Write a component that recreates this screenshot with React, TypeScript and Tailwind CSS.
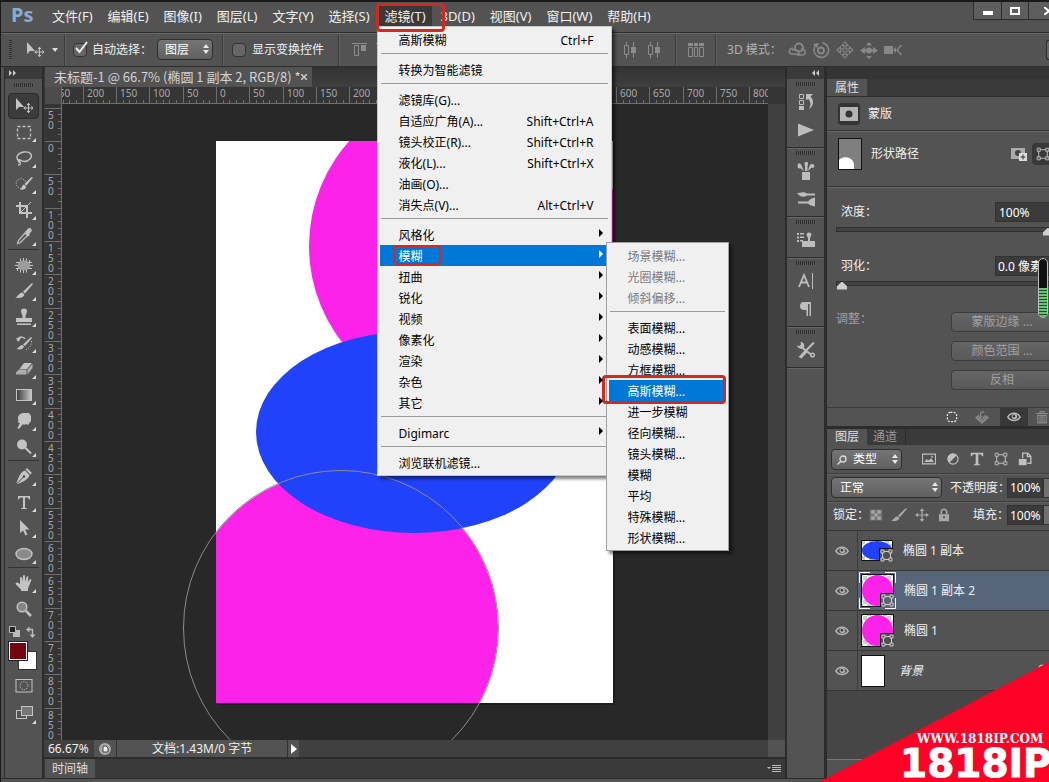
import React from 'react';

type Icon = React.FC;

const Svg: React.FC<{ children: React.ReactNode; size?: string }> = ({ children, size = 'w-[18px] h-[18px]' }) => (
  <svg viewBox="0 0 18 18" className={`${size} shrink-0`} fill="currentColor" stroke="none" aria-hidden="true">
    {children}
  </svg>
);

const MoveIcon: Icon = () => (
  <Svg>
    <path d="M1 1v12l3-3 5 0z" />
    <path d="M13.500 6.500v9M9 11h9M12 8.200l1.500-2 1.500 2M12 13.800l1.500 2 1.500-2M10.700 9.500l-2 1.500 2 1.500M16.300 9.500l2 1.500-2 1.500" fill="none" stroke="currentColor" />
  </Svg>
);
const MarqueeIcon: Icon = () => (
  <Svg><rect x="2.500" y="3.500" width="13" height="12" fill="none" stroke="currentColor" strokeWidth="1.300" strokeDasharray="3 2" /></Svg>
);
const LassoIcon: Icon = () => (
  <Svg>
    <path d="M4 12C0 9 2 4 9 3c7-1 9 4 6 7-3 3-7 3-10 1-2-1-2 1-1 2 2 1 2 3-1 3" fill="none" stroke="currentColor" strokeWidth="1.400" />
    <circle cx="4.500" cy="11.800" r="1.400" />
  </Svg>
);
const QuickSelectIcon: Icon = () => (
  <Svg>
    <circle cx="6" cy="8.500" r="4.800" fill="none" stroke="currentColor" strokeDasharray="1.200 1.200" />
    <path d="M18 2.500l-6.500 8-2-1.500 7-7zM9 9.500l2 2c0 3-3 3.500-6 3 2-1 1.500-4 4-5z" />
  </Svg>
);
const CropIcon: Icon = () => (
  <Svg>
    <path d="M5 1v11h12M1 5h11v12" fill="none" stroke="currentColor" strokeWidth="2" />
    <path d="M5.500 11.500L16 1" stroke="currentColor" />
  </Svg>
);
const EyedropperIcon: Icon = () => (
  <Svg>
    <path d="M10 4.500l1.500-1 1.500-2c2-1.500 4.500.5 3.500 3l-2 2 0 2-1.500 1z" />
    <path d="M10 6l2.500 2.500-7 7-3 1 1-3z" fill="none" stroke="currentColor" strokeWidth="1.200" />
  </Svg>
);
const PatchIcon: Icon = () => (
  <Svg>
    <ellipse cx="9" cy="9.500" rx="6.500" ry="5" fill="#9c9c9c" />
    <path d="M5.500 2.500v3M8.500 2v3M11.500 2.500v3M5.500 13.500v3M8.500 14v3M11.500 13.500v3M14.500 4v3M2.500 12v3M1 6.500h4M0 9.500h3M1 12.500h4M13 6.500h4M15 9.500h3M13 12.500h4" stroke="currentColor" />
  </Svg>
);
const BrushIcon: Icon = () => (
  <Svg>
    <path d="M17 1l1 1-8 9.500-2-1.800zM7.500 10.500l2 2C8.500 16 4 16.500 0 15.500c3-.5 4-5 7.500-5z" />
  </Svg>
);
const StampIcon: Icon = () => (
  <Svg>
    <path d="M6 3.500a3 3 0 0 1 6 0c0 2-1.500 2.500-1.500 4.500v2H17v4H1v-4h6.500V8C7.500 6 6 5.500 6 3.500zM2 15.500h14V17H2z" />
  </Svg>
);
const HistoryBrushIcon: Icon = () => (
  <Svg>
    <path d="M16 3l1 1-7 8-2-1.600zM7.500 11l1.500 1.500C8 15.500 5 16 1 15c3-.5 3.500-4 6.500-4z" />
    <path d="M3 5c2-3 6-2 7 0" fill="none" stroke="currentColor" strokeWidth="1.500" />
    <path d="M1 4l5 .5L3 8z" />
    <path d="M16.500 7c0 4-1 7-6 9" fill="none" stroke="currentColor" strokeDasharray="1 1.500" />
  </Svg>
);
const EraserIcon: Icon = () => (
  <Svg>
    <path d="M9 3h8l-5 6H4.500z" />
    <path d="M12.500 9.500L17.500 4v4l-5 6.500zM1 14.500v-2l3-3h7.500v5z" opacity=".8" />
  </Svg>
);
const GradientIcon: Icon = () => (
  <Svg>
    <defs>
      <linearGradient id="grad"><stop stopColor="#3a3a3a" /><stop offset="1" stopColor="#c8c8c8" /></linearGradient>
    </defs>
    <rect x="1.500" y="3.500" width="15" height="11" fill="url(#grad)" stroke="currentColor" />
  </Svg>
);
const SmudgeIcon: Icon = () => (
  <Svg>
    <path d="M3 6c0-3 3-5 6-5h5l2 3v5l-3 4-2-1-2 1-1-1-4 5-1.500-1L5 11H3.500z" />
  </Svg>
);
const DodgeIcon: Icon = () => (
  <Svg>
    <circle cx="7" cy="6.500" r="5" />
    <path d="M10 9.500l6 6" stroke="currentColor" strokeWidth="2" />
  </Svg>
);
const PenIcon: Icon = () => (
  <Svg>
    <path d="M12 1l5 5-1.500 1.500-5-5zM10 3.500l4.500 4.500c-1 4-5 6-12 9L1.500 16C4 9 6 4.500 10 3.500z" />
    <path d="M2 16.500L8.500 10" stroke="#484848" />
    <circle cx="9" cy="9.500" r="1.200" fill="#484848" />
  </Svg>
);
const TypeIcon: Icon = () => (
  <Svg><path d="M3 3h12v3.500h-1C13.700 5 13 4.500 10 4.500V14c0 1 .5 1.200 2 1.200V16H6v-.8c1.500 0 2-.2 2-1.200V4.500C5 4.500 4.300 5 4 6.500H3z" /></Svg>
);
const PathSelectIcon: Icon = () => (
  <Svg><path d="M5 1v13l3-2.500 2.500 5 2-1-2.500-5h4.500z" /></Svg>
);
const EllipseIcon: Icon = () => (
  <Svg><ellipse cx="9" cy="9" rx="8" ry="5.500" fill="#8a8a8a" stroke="currentColor" strokeWidth="1.300" /></Svg>
);
const HandIcon: Icon = () => (
  <Svg>
    <path d="M5 10V4c0-1.500 1.700-1.500 2 0l.5 3.500L8 2c.2-1.500 1.800-1.500 2 0v5.500L11.500 3c.5-1.300 2-1 1.800.5L12.800 8l1.700-2.500c1-1.300 2.300-.3 1.700 1L13 14.500V17H6v-1.500L1 10.500C0 9 1.500 8 2.800 8.800z" />
  </Svg>
);
const ZoomIcon: Icon = () => (
  <Svg>
    <circle cx="7" cy="7" r="4.800" fill="#858585" stroke="currentColor" strokeWidth="1.500" />
    <path d="M11 11l5 5" stroke="currentColor" strokeWidth="2.500" />
  </Svg>
);
const QuickMaskIcon: Icon = () => (
  <Svg>
    <rect x="1" y="2.500" width="16" height="12.500" fill="none" stroke="currentColor" />
    <circle cx="9" cy="8.700" r="4" fill="none" stroke="currentColor" strokeDasharray="1.300 1.200" />
  </Svg>
);
const ScreenIcon: Icon = () => (
  <Svg>
    <rect x="1.500" y="6.500" width="10" height="8" fill="none" stroke="currentColor" />
    <rect x="6.500" y="2.500" width="11" height="9" fill="#777" stroke="currentColor" />
  </Svg>
);
const HistoryIcon: Icon = () => (
  <Svg>
    <path d="M2.500 1.500h4v4h-4zM2.500 7.500h4v4h-4z" fill="none" stroke="currentColor" />
    <path d="M2 13h5v4H2zM9 7V1h7l-2.500 2.500C18 8 16 14 12 16c2-4 2-7-.5-10z" />
  </Svg>
);
const PlayIcon: Icon = () => <Svg><path d="M1 2.500l16 6.500-16 6.500z" /></Svg>;
const BrushPresetIcon: Icon = () => (
  <Svg>
    <path d="M5 10h8v8H5zM8 0h2.500v9H8zM1 1l3 1.500L7 9 3 6zM16 3l-2 3-3 3 1-4z" />
    <ellipse cx="2.500" cy="4" rx="2" ry="2.500" /><ellipse cx="15" cy="4" rx="2.500" ry="2" /><ellipse cx="9.200" cy="2" rx="1.800" ry="2" />
  </Svg>
);
const BrushPanelIcon: Icon = () => (
  <Svg>
    <path d="M0 3c3 0 5-1.500 8-.5L10 3.500h8v2h-8C7 8 3 7 0 3zM1 11.500h10c2-2.500 4-3.500 7-4v9c-3-.5-5-1-7-3H1z" />
  </Svg>
);
const CloneSourceIcon: Icon = () => (
  <Svg>
    <path d="M0 2h2v2H0zM3 2h4v1.500H3zM0 5.500h2v2H0zM3 5.500h4V7H3zM0 9h2v2H0zM3 9h3v1.500H3zM9.500 4a2.500 2.500 0 0 1 5 0L13 7v3h5v6H5v-6h6V7z" />
  </Svg>
);
const CharacterIcon: Icon = () => (
  <Svg>
    <path d="M2 15L7 3l5 12M4 10.500h6" fill="none" stroke="currentColor" strokeWidth="1.800" />
    <path d="M15.500 1v16" stroke="currentColor" />
  </Svg>
);
const ParagraphIcon: Icon = () => (
  <Svg>
    <path d="M14 2H7a4 4 0 0 0 0 8h2.500v6H11V4h1.500v12H14z" />
  </Svg>
);
const ToolsIcon: Icon = () => (
  <Svg>
    <path d="M17 1.500L9 9.500M3 5l11 8.500" stroke="currentColor" strokeWidth="2" />
    <path d="M8.500 8.500l2.500 2-6.500 7-3-1.500z" />
    <path d="M0 4.500l2.500.5L4 3.500 3.500 1c3 0 4.500 2.500 3.500 5.500-2 2.500-6.500 1-7-2z" />
    <circle cx="15.500" cy="14" r="1.800" fill="none" stroke="currentColor" strokeWidth="1.500" />
  </Svg>
);
const EyeIcon: Icon = () => (
  <Svg size="w-[14px] h-[14px]">
    <path d="M1 9c4-6.500 12-6.500 16 0-4 6-12 6-16 0z" fill="none" stroke="currentColor" strokeWidth="1.800" />
    <circle cx="9.500" cy="8.500" r="3.500" />
    <circle cx="9" cy="8" r="1.600" fill="#333" />
  </Svg>
);
const FrameIcon: Icon = () => (
  <Svg size="w-[14px] h-[14px]">
    <path d="M3.500 3.500h11v11h-11z" fill="none" stroke="currentColor" strokeWidth="1.300" />
    <path d="M1.500 1.500h4v4h-4zM12.500 1.500h4v4h-4zM1.500 12.500h4v4h-4zM12.500 12.500h4v4h-4z" fill="#555" stroke="currentColor" strokeWidth="1.200" />
  </Svg>
);
const PixelIcon: Icon = () => (
  <Svg size="w-[14px] h-[14px]">
    <path d="M.7 2.700h16.600v12.600H.7z" fill="none" stroke="currentColor" strokeWidth="1.400" />
    <path d="M3 13l3-4 2 2 4-3 3 5z" /><circle cx="13" cy="6" r="1.200" />
  </Svg>
);
const AdjustIcon: Icon = () => (
  <Svg size="w-[14px] h-[14px]">
    <circle cx="9" cy="9" r="6.500" fill="none" stroke="currentColor" strokeWidth="1.500" />
    <path d="M4.500 13.500a6.400 6.400 0 1 1 9-9z" />
  </Svg>
);
const SmallTypeIcon: Icon = () => (
  <Svg size="w-[14px] h-[14px]"><path d="M1 1h16v4.500h-1.500C15 3.500 14 3 10.700 3v11.500c0 1.200.8 1.500 2.300 1.500v1H5v-1c1.500 0 2.300-.3 2.300-1.500V3C4 3 3 3.500 2.500 5.500H1z" /></Svg>
);
const SmartIcon: Icon = () => (
  <Svg size="w-[14px] h-[14px]">
    <path d="M6 8V1.500h6.500l4 4v9H12M12 2v4h4" fill="none" stroke="currentColor" strokeWidth="1.700" />
    <path d="M1 9h10v8H1z" />
  </Svg>
);
const CheckerIcon: Icon = () => (
  <Svg size="w-[14px] h-[14px]">
    <path d="M1 2h16v14H1z" opacity=".45" />
    <path d="M3 3h4v4H3zM11 3h4v4h-4zM7 7h4v4H7zM3 11h4v4H3zM11 11h4v4h-4z" />
  </Svg>
);
const SmallBrushIcon: Icon = () => (
  <Svg size="w-[16px] h-[16px]">
    <path d="M17 1l1 1-8 9.500-2-1.800zM7.500 10.500l2 2C8.500 16 4 16.500 0 15.500c3-.5 4-5 7.500-5z" />
  </Svg>
);
const CrossArrowsIcon: Icon = () => (
  <Svg size="w-[14px] h-[14px]">
    <path d="M9 2v14M2 9h14" stroke="currentColor" strokeWidth="1.600" />
    <path d="M9 0l3 4H6zM9 18l3-4H6zM0 9l4-3v6zM18 9l-4-3v6z" />
  </Svg>
);
const LockIcon: Icon = () => (
  <Svg size="w-[14px] h-[14px]">
    <path d="M5.500 8V5a3.500 3.500 0 0 1 7 0v3" fill="none" stroke="currentColor" strokeWidth="2" />
    <path d="M2.500 8h13v9h-13z" /><circle cx="9" cy="12" r="1.300" fill="#444" />
  </Svg>
);
const SelectionIcon: Icon = () => (
  <Svg size="w-[14px] h-[14px]">
    <rect x="3" y="3" width="12" height="12" rx="4" fill="none" stroke="#eee" strokeWidth="1.600" strokeDasharray="2.400 1.800" />
  </Svg>
);
const ApplyIcon: Icon = () => (
  <Svg size="w-[16px] h-[16px]">
    <path d="M1 9.500L6 6v3H4.500L9 14l4.500-5H12V6l5 3.500L9 17z" />
    <path d="M7.500 10V5c0-2 3-2.500 4-1M9 12.500L5.500 9h7z" fill="none" stroke="currentColor" strokeWidth="1.400" />
  </Svg>
);
const TrashIcon: Icon = () => (
  <Svg size="w-[14px] h-[14px]">
    <path d="M1.500 4.500h15M6.500 4V2h5v2M3.500 7h11v9.500h-11zM6.500 7v9M9 7v9M11.500 7v9" fill="none" stroke="currentColor" strokeWidth="1.500" />
  </Svg>
);
const AlignIcon: Icon = () => (
  <Svg>
    <path d="M1 2.500h15M3.500 4.500h4v10h-4z" fill="none" stroke="currentColor" />
    <path d="M10 4h5v6h-5z" />
  </Svg>
);
const DistributeIcon: Icon = () => (
  <Svg>
    <path d="M3.500 1v3M3.500 14v3M1.500 4.500h4v9h-4zM10.500 1v16" fill="none" stroke="currentColor" />
    <path d="M8 6h5v6H8z" />
  </Svg>
);
const AutoAlignIcon: Icon = () => (
  <Svg>
    <path d="M1.500 6.500h4v9h-4zM7.500 6.500h3v9h-3zM12.500 6.500h4v9h-4z" fill="none" stroke="currentColor" />
    <path d="M1 2h5v3H1zM7 2h4v3H7zM12 2h5v3h-5z" />
  </Svg>
);
const OrbitIcon: Icon = () => (
  <Svg>
    <circle cx="11" cy="6.500" r="4" fill="none" stroke="currentColor" strokeWidth="1.800" />
    <path d="M5 7c-5 1-5 6 0 6 4 1 5 0 7-1M13 8c5 0 6 6 1 6H9M4 9c3-1 5 0 7 2" fill="none" stroke="currentColor" strokeWidth="1.600" />
  </Svg>
);
const RollIcon: Icon = () => (
  <Svg>
    <circle cx="9" cy="9.500" r="3" fill="none" stroke="currentColor" strokeWidth="1.800" />
    <path d="M4 4a7.300 7.300 0 1 0 6-2.200" fill="none" stroke="currentColor" strokeWidth="1.600" />
    <path d="M1 3l6-1-2 5z" />
  </Svg>
);
const PanIcon: Icon = () => (
  <Svg>
    <path d="M9 1l3 3.500h-2V8h3.500V6L17 9l-3.500 3v-2H10v3.500h2L9 17l-3-3.500h2V10H4.500v2L1 9l3.500-3v2H8V4.500H6z" fill="none" stroke="currentColor" strokeWidth="1.100" />
  </Svg>
);
const SlideIcon: Icon = () => (
  <Svg>
    <circle cx="9" cy="9.500" r="3" />
    <path d="M9 1l3 3.500H6zM9 18l3-3H6zM0 9.500L5 6v7zM18 9.500L13 6v7z" />
    <path d="M2 9.500h14" stroke="currentColor" strokeWidth="2" />
  </Svg>
);
const CameraIcon: Icon = () => (
  <Svg>
    <path d="M0 5h9v8H0zM9 9l3-3v6z" /><path d="M17.500 4L13 9l4.500 5" fill="none" stroke="currentColor" strokeWidth="1.500" />
  </Svg>
);

const menus = ['文件(F)', '编辑(E)', '图像(I)', '图层(L)', '文字(Y)', '选择(S)', '滤镜(T)', '3D(D)', '视图(V)', '窗口(W)', '帮助(H)'];

interface MenuEntry {
  label?: string;
  keys?: string;
  sub?: boolean;
  disabled?: boolean;
}

const filterMenu: MenuEntry[] = [
  { label: '高斯模糊', keys: 'Ctrl+F' },
  {},
  { label: '转换为智能滤镜' },
  {},
  { label: '滤镜库(G)...' },
  { label: '自适应广角(A)...', keys: 'Shift+Ctrl+A' },
  { label: '镜头校正(R)...', keys: 'Shift+Ctrl+R' },
  { label: '液化(L)...', keys: 'Shift+Ctrl+X' },
  { label: '油画(O)...' },
  { label: '消失点(V)...', keys: 'Alt+Ctrl+V' },
  {},
  { label: '风格化', sub: true },
  { label: '模糊', sub: true },
  { label: '扭曲', sub: true },
  { label: '锐化', sub: true },
  { label: '视频', sub: true },
  { label: '像素化', sub: true },
  { label: '渲染', sub: true },
  { label: '杂色', sub: true },
  { label: '其它', sub: true },
  {},
  { label: 'Digimarc', sub: true },
  {},
  { label: '浏览联机滤镜...' },
];

const blurMenu: MenuEntry[] = [
  { label: '场景模糊...', disabled: true },
  { label: '光圈模糊...', disabled: true },
  { label: '倾斜偏移...', disabled: true },
  {},
  { label: '表面模糊...' },
  { label: '动感模糊...' },
  { label: '方框模糊...' },
  { label: '高斯模糊...' },
  { label: '进一步模糊' },
  { label: '径向模糊...' },
  { label: '镜头模糊...' },
  { label: '模糊' },
  { label: '平均' },
  { label: '特殊模糊...' },
  { label: '形状模糊...' },
];

const Separator = () => (
  <li className="h-[9px] px-px pt-[3px]">
    <div className="h-px bg-[#9a9a9a]" />
  </li>
);

const BlurMenu = () => (
  <ul className="absolute left-[226px] -top-[3px] w-[123px] border border-[#a0a0a0] bg-[#f0f0f0] px-[2px] py-[2px] text-black shadow-[3px_3px_3px_rgba(0,0,0,0.5)]">
    {blurMenu.map((item, i) => {
      if (!item.label) return <Separator key={i} />;
      const active = item.label === '高斯模糊...';
      return (
        <li key={i} className={`relative h-[21px] ${active ? 'bg-[#0078d7] text-white' : ''}`}>
          <button disabled={item.disabled} className="h-full w-full pl-[19px] pt-[3px] text-left disabled:text-[#7a7a7a]">{item.label}</button>
          {active && <div className="absolute -left-[7px] -top-[5px] h-[29px] w-[124px] rounded border-[3px] border-[#d5281e]" />}
        </li>
      );
    })}
  </ul>
);

const FilterMenu = () => (
  <ul className="absolute -left-[2px] top-5 w-[235px] border border-[#c8c8c8] bg-[#f0f0f0] px-[2px] py-[2px] text-xs text-black shadow-[3px_3px_3px_rgba(0,0,0,0.5)]">
    {filterMenu.map((item, i) => {
      if (!item.label) return <Separator key={i} />;
      const active = item.label === '模糊';
      return (
        <li key={i} className={`relative h-[21px] ${active ? 'bg-[#0078d7]' : ''}`}>
          <button className={`flex h-full w-full items-center justify-between pl-[19px] pt-[3px] ${item.sub ? 'pr-[6px]' : 'pr-[15px]'} ${active ? 'text-white' : ''}`}>
            <span>{item.label}</span>
            {item.keys && <span>{item.keys}</span>}
            {item.sub && <svg viewBox="0 0 4 8" className="mb-[5px] h-2 w-1" fill="currentColor"><path d="M0 0l4 4-4 4z" /></svg>}
          </button>
          {active && <div className="absolute left-[13px] top-0 h-5 w-12 rounded border-2 border-[#d5281e]" />}
          {active && <BlurMenu />}
        </li>
      );
    })}
  </ul>
);

const MenuBar = () => (
  <header className="relative z-20 flex h-8 shrink-0 items-center border-t-2 border-[#1a1a1a] bg-[#535353] pb-0.5 pl-[10px] text-[13px]">
    <span className="w-[35px] pb-0.5 text-[20px] font-bold leading-6 text-[#84aed6]">Ps</span>
    <nav className="flex gap-[3px]">
      {menus.map(m => (
        <div key={m} className="relative">
          <button className={`h-[21px] whitespace-nowrap px-1.5 leading-5 ${m === '滤镜(T)' ? 'bg-[#3a3838]' : ''}`}>{m}</button>
          {m === '滤镜(T)' && (
            <>
              <FilterMenu />
              <div className="absolute -left-[3px] -top-[3px] z-10 h-[29px] w-[69px] rounded border-[3px] border-[#d5281e]" />
            </>
          )}
        </div>
      ))}
    </nav>
    <div className="ml-auto flex w-[76px] shrink-0 self-start overflow-hidden border-b border-l border-[#2c2c2c]">
      <button aria-label="最小化" className="flex h-[17px] w-7 shrink-0 items-center justify-center border-r border-[#2c2c2c] bg-[#5e5e5e]">
        <span className="mt-1 h-1 w-[10px] bg-white" />
      </button>
      <button aria-label="最大化" className="flex h-[17px] w-[27px] shrink-0 items-center justify-center border-r border-[#2c2c2c] bg-[#5e5e5e]">
        <span className="h-2 w-[10px] border-2 border-white" />
      </button>
      <button aria-label="关闭" className="flex h-[17px] w-10 shrink-0 items-center justify-center bg-[#5e5e5e]">
        <svg viewBox="0 0 10 8" className="h-2 w-[10px]" stroke="#fff" strokeWidth="2"><path d="M0 0l10 8M10 0L0 8" /></svg>
      </button>
    </div>
  </header>
);

const Divider = ({ className }: { className: string }) => (
  <span className={`h-8 w-[2px] shrink-0 border-l border-r border-l-[#3c3c3c] border-r-[#626262] ${className}`} />
);

const Spinner = () => (
  <svg viewBox="0 0 6 10" className="pointer-events-none absolute right-1 top-[5px] h-[10px] w-[6px]" fill="#e8e8e8">
    <path d="M0 4l3-4 3 4zM0 6l3 4 3-4z" />
  </svg>
);

const selectStyle = 'h-[21px] w-full appearance-none rounded-sm border border-[#2e2e2e] bg-linear-to-b from-[#757575] to-[#606060] text-xs leading-none text-white';

const Check = ({ checked }: { checked?: boolean }) => (
  <span className="relative h-[14px] w-[14px] shrink-0">
    <input type="checkbox" defaultChecked={checked} className="peer block h-[14px] w-[14px] appearance-none rounded-sm border border-[#333] bg-[#666]" />
    <svg viewBox="0 0 14 14" className="pointer-events-none absolute left-0.5 -top-0.5 hidden h-[14px] w-[14px] peer-checked:block" fill="none" stroke="#eee" strokeWidth="2">
      <path d="M1 7l3.500 4L12 1" />
    </svg>
  </span>
);

const OptionsBar = () => (
  <div className="flex h-[35px] shrink-0 items-center overflow-hidden whitespace-nowrap border-b border-t border-b-[#2e2e2e] border-t-[#2f2f2f] bg-[#535353] pl-2 text-xs shadow-[inset_0_1px_0_#6a6a6a]">
    <span className="h-5 w-[3px] shrink-0 bg-[repeating-linear-gradient(180deg,#2e2e2e_0_1px,#5a5a5a_1px_2px)]" />
    <span className="ml-[14px] flex shrink-0 text-[#c4c4c4]"><MoveIcon /></span>
    <svg viewBox="0 0 6 4" className="ml-2 h-1 w-[6px] shrink-0" fill="#ddd"><path d="M0 0h6L3 4z" /></svg>
    <Divider className="ml-[6px]" />
    <label className="ml-[7px] flex items-center gap-[5px]"><Check checked />自动选择：</label>
    <span className="relative ml-[5px] w-14 shrink-0">
      <select aria-label="自动选择" className={`${selectStyle} pl-[7px]`}><option>图层</option></select>
      <Spinner />
    </span>
    <Divider className="ml-[9px]" />
    <label className="ml-2 flex items-center gap-[6px]"><Check />显示变换控件</label>
    <Divider className="ml-[14px]" />
    <div className="ml-[11px] flex shrink-0 gap-[6px] text-[#8c8c8c]">
      {[...Array(7)].map((_, i) => <AlignIcon key={i} />)}
    </div>
    <div className="ml-[14px] flex shrink-0 gap-[6px] text-[#8c8c8c]">
      {[...Array(6)].map((_, i) => <DistributeIcon key={i} />)}
    </div>
    <Divider className="ml-[10px]" />
    <span className="ml-[10px] flex shrink-0 text-[#8c8c8c]"><AutoAlignIcon /></span>
    <Divider className="ml-[10px]" />
    <span className="ml-[10px] w-[61px] shrink-0 text-[#b0b0b0]">3D 模式：</span>
    <div className="flex shrink-0 gap-[6px] text-[#888]">
      <OrbitIcon /><RollIcon /><PanIcon /><SlideIcon /><CameraIcon />
    </div>
    <span className="ml-auto h-5 w-[3px] shrink-0 rounded-l-sm border border-r-0 border-[#2e2e2e] bg-[#666]" />
  </div>
);

const toolGroups: [string, Icon][][] = [
  [['移动', MoveIcon], ['矩形选框', MarqueeIcon], ['套索', LassoIcon], ['快速选择', QuickSelectIcon], ['裁剪', CropIcon], ['吸管', EyedropperIcon]],
  [['修补', PatchIcon], ['画笔', BrushIcon], ['仿制图章', StampIcon], ['历史记录画笔', HistoryBrushIcon], ['橡皮擦', EraserIcon], ['渐变', GradientIcon], ['涂抹', SmudgeIcon], ['减淡', DodgeIcon]],
  [['钢笔', PenIcon], ['文字', TypeIcon], ['路径选择', PathSelectIcon], ['椭圆', EllipseIcon]],
  [['抓手', HandIcon], ['缩放', ZoomIcon]],
];

const Corner = () => (
  <svg viewBox="0 0 4 4" className="absolute bottom-[3px] right-[3px] h-1 w-1" fill="#ddd"><path d="M4 0v4H0z" /></svg>
);

const Grip = () => (
  <span className="h-1 w-5 bg-[repeating-linear-gradient(90deg,#2c2c2c_0_1px,#5a5a5a_1px_2px)]" />
);

const Toolbar = () => (
  <aside className="flex w-[39px] shrink-0 flex-col border-r-2 border-[#2c2c2c] text-[#c4c4c4]">
    <div className="flex h-3 shrink-0 items-center bg-[#3a3a3a] pl-1">
      <svg viewBox="0 0 8 6" className="h-[6px] w-2" fill="#ccc"><path d="M0 0l3 3-3 3zM4 0l3 3-3 3z" /></svg>
    </div>
    <div className="flex h-[14px] shrink-0 justify-center pt-1"><Grip /></div>
    {toolGroups.map((group, g) => (
      <div key={g} className={`mx-[3px] flex flex-col ${g > 0 ? 'border-t border-[#333] pt-[2px]' : ''}`}>
        {group.map(([label, ToolIcon]) => (
          <button
            key={label}
            aria-label={label}
            className={`relative flex h-[26px] items-center justify-center ${label === '移动' ? 'rounded-sm border border-[#2b2b2b] bg-[#3c3c3c]' : ''}`}
          >
            <ToolIcon />
            {label !== '移动' && label !== '缩放' && <Corner />}
          </button>
        ))}
      </div>
    ))}
    <div className="mt-1 flex h-3 shrink-0 justify-between px-1">
      <svg viewBox="0 0 12 12" className="h-3 w-3" fill="#bbb"><path d="M4 4h7v7H4z" /><path d="M.5.5h6v6h-6z" fill="#222" stroke="#bbb" /></svg>
      <svg viewBox="0 0 12 12" className="h-3 w-3" fill="#bbb"><path d="M2 3.500h4.500V9" fill="none" stroke="#bbb" strokeWidth="1.400" /><path d="M0 3.500L3.500.5v6zM6.500 12l-3-3.500h6z" /></svg>
    </div>
    <div className="relative ml-1 mt-1 h-7 w-7 shrink-0">
      <button aria-label="背景色" className="absolute bottom-0 right-0 h-[19px] w-[19px] border border-[#333] bg-white" />
      <button aria-label="前景色" className="absolute left-0 top-0 h-[18px] w-[18px] border border-white bg-[#720510] outline outline-[#222]" />
    </div>
    <button aria-label="快速蒙版" className="mt-[3px] flex h-[26px] shrink-0 items-center justify-center"><QuickMaskIcon /></button>
    <button aria-label="屏幕模式" className="relative mx-[3px] flex h-[28px] shrink-0 items-center justify-center"><ScreenIcon /><Corner /></button>
  </aside>
);

// 50 units of the ruler are 100/3 px at 66.67% zoom
const STEP = 100 / 3;
const range = (from: number, to: number) => [...Array(to - from + 1)].map((_, i) => from + i);

const HorizontalRuler = () => (
  <svg className="h-[17px] w-full" fontSize="10" fill="#a8a8a8">
    <path d="M0 16.500h706" stroke="#6e6e6e" />
    {range(-25, 88).map(i => (
      <path key={i} d={`M${Math.round(154 + (i * STEP) / 5) + 0.5} ${i % 5 === 0 ? 0 : 13}V17`} stroke="#6e6e6e" />
    ))}
    {range(-5, 16).map(i => (
      <text key={i} x={Math.round(158 + i * STEP)} y="10">{Math.abs(i * 50)}</text>
    ))}
  </svg>
);

const VerticalRuler = () => (
  <svg className="h-full w-[17px] shrink-0 bg-[#353535]" fontSize="10" fill="#a8a8a8">
    <path d="M16.500 0v640" stroke="#6e6e6e" />
    {range(-5, 90).map(i => (
      <path key={i} d={`M${i % 5 === 0 ? 0 : 13} ${Math.round(37 + (i * STEP) / 5) + 0.5}H17`} stroke="#6e6e6e" />
    ))}
    {range(-1, 17).map(i =>
      String(Math.abs(i * 50)).split('').map((digit, d) => (
        <text key={`${i}-${d}`} x="3" y={Math.round(48 + i * STEP) + d * 10}>{digit}</text>
      ))
    )}
  </svg>
);

const Artwork = () => (
  <svg className="h-full w-full">
    <defs>
      <clipPath id="page"><rect x="154" y="37" width="397" height="562" /></clipPath>
    </defs>
    <rect x="156" y="39" width="397" height="562" fill="#1e1e1e" />
    <rect x="154" y="37" width="397" height="562" fill="#fff" />
    <g clipPath="url(#page)">
      <circle cx="404" cy="142" r="157" fill="#fd22ea" />
      <circle cx="279" cy="524" r="157" fill="#fd22ea" />
      <ellipse cx="352" cy="328" rx="158" ry="101" fill="#2142fb" />
    </g>
    <circle cx="279" cy="524" r="157.500" fill="none" stroke="#8c8c8c" />
  </svg>
);

const Document = () => (
  <main className="flex min-w-0 flex-1 flex-col bg-[#3a3a3a]">
    <div className="flex h-5 shrink-0 items-stretch bg-linear-to-b from-[#333] to-[#3f3f3f] pl-px">
      <div className="flex w-[267px] items-center justify-between whitespace-nowrap bg-[#535353] pl-[9px] pr-[7px] font-['Noto_Sans_CJK_SC',sans-serif] text-[13px] text-[#d4d4d4]">
        未标题-1 @ 66.7% (椭圆 1 副本 2, RGB/8) *
        <button aria-label="关闭文档" className="text-[#ccc]">
          <svg viewBox="0 0 6 6" className="h-[6px] w-[6px]" stroke="currentColor" strokeWidth="1.500"><path d="M0 0l6 6M6 0L0 6" /></svg>
        </button>
      </div>
    </div>
    <div className="flex h-[17px] shrink-0 bg-[#353535] pl-px pr-[17px]">
      <span className="w-[17px] shrink-0 border-r border-[#6e6e6e] bg-[#4c4c4c]" />
      <HorizontalRuler />
    </div>
    <div className="flex min-h-0 flex-1 pl-px">
      <VerticalRuler />
      <div className="min-w-0 flex-1 overflow-hidden bg-[#282828]"><Artwork /></div>
      <div className="w-[17px] shrink-0 bg-[#404040]" />
    </div>
    <div className="flex h-[17px] shrink-0 items-center bg-[#404040] pl-px text-xs">
      <span className="w-[49px] shrink-0 pl-[3px]">66.67%</span>
      <button aria-label="状态" className="flex h-full w-[23px] items-center justify-center border-r border-[#333] bg-[#535353]">
        <svg viewBox="0 0 12 12" className="h-3 w-3" fill="#aaa"><circle cx="6" cy="6" r="6" /><path d="M4 3h3l2 2v4H4z" fill="#eee" stroke="#444" /></svg>
      </button>
      <span className="flex h-full w-[170px] items-center whitespace-nowrap bg-[#535353] pl-[35px]">文档:1.43M/0 字节</span>
      <button aria-label="更多" className="flex h-full w-3 items-center justify-center border-l border-[#333] bg-[#535353]">
        <svg viewBox="0 0 6 10" className="h-[10px] w-[6px]" fill="#fff"><path d="M0 0l6 5-6 5z" /></svg>
      </button>
      <span className="ml-auto h-full w-[17px] bg-[#535353]" />
    </div>
    <div className="flex h-[21px] shrink-0 items-stretch border-t-2 border-[#2c2c2c] pl-px text-xs">
      <span className="flex w-[50px] items-center bg-[#535353] pl-[7px] text-[#ddd]">时间轴</span>
      <svg viewBox="0 0 14 8" className="ml-auto mr-1 mt-[6px] h-2 w-[14px]" stroke="#bbb" fill="#bbb"><path d="M5 .5h9M5 2.500h9M5 4.500h9M5 6.500h9" /><path d="M0 2h4L2 4z" stroke="none" /></svg>
    </div>
  </main>
);

const dockGroups: [string, Icon][][] = [
  [['历史记录', HistoryIcon], ['动作', PlayIcon]],
  [['画笔预设', BrushPresetIcon], ['画笔', BrushPanelIcon]],
  [['仿制源', CloneSourceIcon]],
  [['字符', CharacterIcon], ['段落', ParagraphIcon]],
  [['工具预设', ToolsIcon]],
];

const Dock = () => (
  <aside className="flex w-[41px] shrink-0 flex-col border-l-2 border-r-2 border-[#2c2c2c] text-[#bdbdbd]">
    <div className="flex h-3 shrink-0 items-center justify-end bg-[#3a3a3a] pr-1">
      <svg viewBox="0 0 8 6" className="h-[6px] w-2" fill="#ccc"><path d="M3 0L0 3l3 3zM7 0L4 3l3 3z" /></svg>
    </div>
    {dockGroups.map((group, g) => (
      <div key={g} className="flex flex-col items-center border-b border-[#2c2c2c] pb-[3px] shadow-[0_1px_0_#666]">
        <div className="flex h-[9px] items-center"><Grip /></div>
        {group.map(([label, DockIcon]) => (
          <button key={label} aria-label={label} className="flex h-7 w-7 items-center justify-center"><DockIcon /></button>
        ))}
      </div>
    ))}
  </aside>
);

const field = 'h-5 shrink-0 border border-[#333] bg-[#3b3b3b] text-xs text-white';
const slider =
  'block h-[10px] w-[218px] appearance-none bg-transparent [&::-webkit-slider-runnable-track]:h-[5px] [&::-webkit-slider-runnable-track]:border [&::-webkit-slider-runnable-track]:border-[#303030] [&::-webkit-slider-runnable-track]:bg-[#424242] [&::-webkit-slider-thumb]:h-2 [&::-webkit-slider-thumb]:w-[10px] [&::-webkit-slider-thumb]:appearance-none [&::-webkit-slider-thumb]:bg-[#d0d0d0] [&::-webkit-slider-thumb]:[clip-path:polygon(50%_0,100%_60%,100%_100%,0_100%,0_60%)]';

// the panel is wider than what is left of the window, so its right side is cut off
const Properties = () => (
  <section className="shrink-0">
    <div className="flex h-[18px] border-b border-[#2f2f2f] bg-[#3a3a3a] text-xs">
      <h2 className="flex w-10 items-center bg-[#535353] pl-2 text-[#e0e0e0]">属性</h2>
    </div>
    <div className="flex h-[34px] items-center gap-2 border-b border-[#353535] pl-[11px] text-xs shadow-[0_1px_0_#666]">
      <span className="flex h-[22px] w-[22px] items-center justify-center rounded-sm bg-[#343434]">
        <svg viewBox="0 0 18 14" className="h-[14px] w-[18px]"><path d="M0 0h18v14H0z" fill="#b4b4b4" /><circle cx="9" cy="7" r="3.500" fill="#333" /></svg>
      </span>
      蒙版
    </div>
    <div className="flex h-14 items-center border-b border-[#353535] pb-[9px] pl-[11px] text-xs shadow-[0_1px_0_#666]">
      <svg viewBox="0 0 24 32" className="h-8 w-6 shrink-0"><path d="M.5.5h23v31H.5z" fill="#7f7f7f" stroke="#111" /><path d="M1 31V22c4-5 14-3 15 4v5z" fill="#fff" /></svg>
      <span className="ml-[9px] w-[140px] shrink-0">形状路径</span>
      <svg viewBox="0 0 16 14" className="h-[14px] w-4 shrink-0"><path d="M0 1h14v11H0z" fill="#aaa" /><circle cx="7" cy="6" r="3" fill="#444" /><path d="M8 6h8v8H8z" fill="#ddd" /><path d="M12 7.500v5M9.500 10h5" stroke="#333" /></svg>
      <span className="ml-[5px] flex h-[22px] w-[22px] shrink-0 items-center justify-center rounded-sm bg-[#383838] text-[#bbb]"><FrameIcon /></span>
    </div>
    <div className="flex h-[220px] flex-col pl-[9px] pt-[15px] text-xs">
      <div className="flex items-center pl-[5px]">
        <label htmlFor="density" className="w-[154px] shrink-0">浓度：</label>
        <input id="density" defaultValue="100%" className={`${field} w-[60px] pl-[3px]`} />
      </div>
      <input type="range" aria-label="浓度" defaultValue="100" className={`${slider} mt-[2px]`} />
      <div className="mt-[22px] flex items-center pl-[5px]">
        <label htmlFor="feather" className="w-[154px] shrink-0">羽化：</label>
        <input id="feather" defaultValue="0.0 像素" className={`${field} w-[60px] pl-[2px]`} />
      </div>
      <input type="range" aria-label="羽化" defaultValue="0" className={`${slider} mt-[2px]`} />
      <div className="mt-6 flex text-[#a0a0a0]">
        <span className="w-[115px] shrink-0 leading-[14px]">调整：</span>
        <div className="flex w-[102px] shrink-0 flex-col gap-[9px]">
          {['蒙版边缘 ...', '颜色范围 ...', '反相'].map(label => (
            <button key={label} className="h-5 rounded-sm border border-[#3c3c3c] bg-linear-to-b from-[#656565] to-[#595959] leading-none">{label}</button>
          ))}
        </div>
      </div>
    </div>
    <div className="flex h-5 items-center border-b border-t border-b-[#2c2c2c] border-t-[#3c3c3c] pl-[118px] text-[#888]">
      <button aria-label="载入选区" className="flex w-[14px]"><SelectionIcon /></button>
      <button aria-label="应用蒙版" className="ml-[15px] flex w-4"><ApplyIcon /></button>
      <button aria-label="停用蒙版" className="ml-[10px] flex h-full w-7 items-center justify-center bg-[#383838] text-[#bbb]"><EyeIcon /></button>
      <button aria-label="删除蒙版" className="ml-[7px] flex w-[14px]"><TrashIcon /></button>
    </div>
  </section>
);

const Checkered = () => (
  <pattern id="checker" width="8" height="8" patternUnits="userSpaceOnUse">
    <path d="M0 0h8v8H0z" fill="#fff" /><path d="M0 0h4v4H0zM4 4h4v4H4z" fill="#ccc" />
  </pattern>
);

const BlueThumb = () => (
  <svg viewBox="0 0 34 22" className="h-[22px] w-[34px]">
    <defs><Checkered /></defs>
    <path d="M.5.5h31v20H.5z" fill="url(#checker)" stroke="#111" />
    <ellipse cx="16" cy="10.500" rx="15" ry="9.500" fill="#2142fb" />
    <path d="M18 9h15v13H18z" fill="#4f4f4f" /><path d="M18.500 21V8.500H32" fill="none" stroke="#111" />
    <path d="M21.500 11.500h8v8h-8z" fill="none" stroke="#ccc" />
    <path d="M20 10h3v3h-3zM28 10h3v3h-3zM20 18h3v3h-3zM28 18h3v3h-3z" fill="#555" stroke="#ccc" />
  </svg>
);

const PinkThumb = ({ selected }: { selected?: boolean }) => (
  <svg viewBox="0 0 38 38" className="h-[38px] w-[38px]">
    <path d="M2.500 2.500h32v32h-32z" fill="url(#checker)" stroke="#111" />
    <circle cx="18.500" cy="18.500" r="15.500" fill="#fd22ea" />
    <path d="M21 22h14v13H21z" fill={selected ? '#56657a' : '#4f4f4f'} /><path d="M21.500 35V21.500H35" fill="none" stroke="#111" />
    <path d="M24.500 24.500h8v8h-8z" fill="none" stroke="#ccc" />
    <path d="M23 23h3v3h-3zM31 23h3v3h-3zM23 31h3v3h-3zM31 31h3v3h-3z" fill="#555" stroke="#ccc" />
    {selected && <path d="M.5 11V.5H11M26 .5h10.500V11M.5 26v10.500H11M26 36.500h10.500V26" fill="none" stroke="#fff" />}
  </svg>
);

const PageThumb = () => <span className="h-8 w-6 border border-[#111] bg-white" />;

const layers = [
  { name: '椭圆 1 副本', thumb: <BlueThumb />, pad: 'pl-[3px]', gap: 'gap-2' },
  { name: '椭圆 1 副本 2', thumb: <PinkThumb selected />, pad: 'pl-px', gap: 'gap-[7px]', selected: true },
  { name: '椭圆 1', thumb: <PinkThumb />, pad: 'pl-px', gap: 'gap-[7px]' },
  { name: '背景', thumb: <PageThumb />, pad: 'pl-[3px]', gap: 'gap-[14px]', locked: true },
];

const Layers = () => (
  <section className="flex min-h-0 flex-1 flex-col border-t-2 border-[#2c2c2c] text-xs">
    <div className="flex h-4 shrink-0 bg-[#3a3a3a]">
      <h2 className="flex w-10 items-center bg-[#535353] pl-2 text-[#e0e0e0]">图层</h2>
      <h2 className="flex w-[39px] items-center border-r border-[#2c2c2c] pl-[6px] text-[#999]">通道</h2>
    </div>
    <div className="flex h-[29px] shrink-0 items-center border-b border-[#3c3c3c] pl-1 shadow-[0_1px_0_#626262]">
      <span className="relative w-[71px]">
        <svg viewBox="0 0 10 10" className="pointer-events-none absolute left-[6px] top-[6px] h-[10px] w-[10px]" fill="none" stroke="#ddd" strokeWidth="1.300"><circle cx="6" cy="4" r="3" /><path d="M4 6L.5 9.500" /></svg>
        <select aria-label="图层类型" className={`${selectStyle} pl-[21px]`}><option>类型</option></select>
        <Spinner />
      </span>
      <div className="ml-5 flex gap-[10px] text-[#c0c0c0]"><PixelIcon /><AdjustIcon /><SmallTypeIcon /><FrameIcon /><SmartIcon /></div>
    </div>
    <div className="flex h-7 shrink-0 items-center border-b border-[#3c3c3c] pl-1 shadow-[0_1px_0_#626262]">
      <span className="relative w-[111px] shrink-0">
        <select aria-label="混合模式" className={`${selectStyle} pl-2`}><option>正常</option></select>
        <Spinner />
      </span>
      <label htmlFor="opacity" className="ml-2 w-[57px] shrink-0 whitespace-nowrap">不透明度：</label>
      <input id="opacity" defaultValue="100%" className={`${field} w-9 pl-[2px]`} />
      <span className="h-5 w-3 shrink-0 border border-[#333] bg-[#707070]" />
    </div>
    <div className="flex h-[29px] shrink-0 items-center border-b border-[#363636] pb-[2px] pl-[6px]">
      <span className="w-9 shrink-0 whitespace-nowrap">锁定：</span>
      <div className="flex w-[104px] shrink-0 items-center gap-2 text-[#a8a8a8]"><CheckerIcon /><SmallBrushIcon /><CrossArrowsIcon /><LockIcon /></div>
      <label htmlFor="fill" className="w-[34px] shrink-0 whitespace-nowrap">填充：</label>
      <input id="fill" defaultValue="100%" className={`${field} w-9 pl-[2px]`} />
      <span className="h-5 w-3 shrink-0 border border-[#333] bg-[#707070]" />
    </div>
    <ul className="shrink-0">
      {layers.map(layer => (
        <li key={layer.name} className="flex h-10 border-b border-[#363636] bg-[#535353]">
          <button aria-label={`显示 ${layer.name}`} className="flex w-[31px] shrink-0 items-center justify-center border-r border-[#3c3c3c] text-[#b4b4b4]"><EyeIcon /></button>
          <div className={`flex flex-1 items-center whitespace-nowrap ${layer.pad} ${layer.gap} ${layer.selected ? 'bg-[#56657a]' : ''}`}>
            {layer.thumb}
            <span className={layer.locked ? 'w-[122px] italic' : ''}>{layer.name}</span>
            {layer.locked && <span className="text-[#bbb]"><LockIcon /></span>}
          </div>
        </li>
      ))}
    </ul>
    <div className="flex-1 bg-[#464646]" />
    <div className="h-[19px] shrink-0 border-t border-[#777] bg-[#535353]" />
  </section>
);

const Watermark = () => (
  <div className="absolute bottom-0 right-0 z-10 h-[120px] w-[230px] overflow-hidden bg-[#fe0126] text-white [clip-path:polygon(100%_0,100%_100%,0_100%)]">
    <div className="absolute bottom-[36px] left-[98px] whitespace-nowrap font-['DejaVu_Serif',serif] text-[12px] font-bold leading-[14px]">WWW.1818IP.COM</div>
    <div className="absolute bottom-0 left-[81px] whitespace-nowrap font-['DejaVu_Sans',sans-serif] text-[39px] font-bold leading-9 [-webkit-text-stroke:1px_white]">1818IP</div>
  </div>
);

const Meter = () => (
  <div className="absolute right-[1px] top-[258px] z-10 flex h-[60px] w-[10px] flex-col rounded-full border border-[#bbb] bg-[#111] pt-[29px]">
    <span className="flex-1 rounded-b-full bg-[repeating-linear-gradient(180deg,#5fc870_0_2px,#1c4a24_2px_3px)]" />
  </div>
);

const App: React.FC = () => (
  <div className="relative flex h-screen flex-col overflow-hidden border-l border-[#1a1a1a] bg-[#535353] font-['Noto_Sans','Noto_Sans_CJK_SC',sans-serif] text-[#f0f0f0]">
    <MenuBar />
    <OptionsBar />
    <div className="ml-[3px] flex min-h-0 flex-1 border-l border-[#2c2c2c]">
      <Toolbar />
      <Document />
      <Dock />
      <div className="flex w-[223px] shrink-0 flex-col overflow-hidden border-l border-[#2c2c2c]">
        <div className="h-3 shrink-0 bg-[#353535]" />
        <Properties />
        <Layers />
      </div>
    </div>
    <div className="h-1 shrink-0 border-t border-[#2c2c2c]" />
    <Watermark />
    <Meter />
  </div>
);

export default App;
